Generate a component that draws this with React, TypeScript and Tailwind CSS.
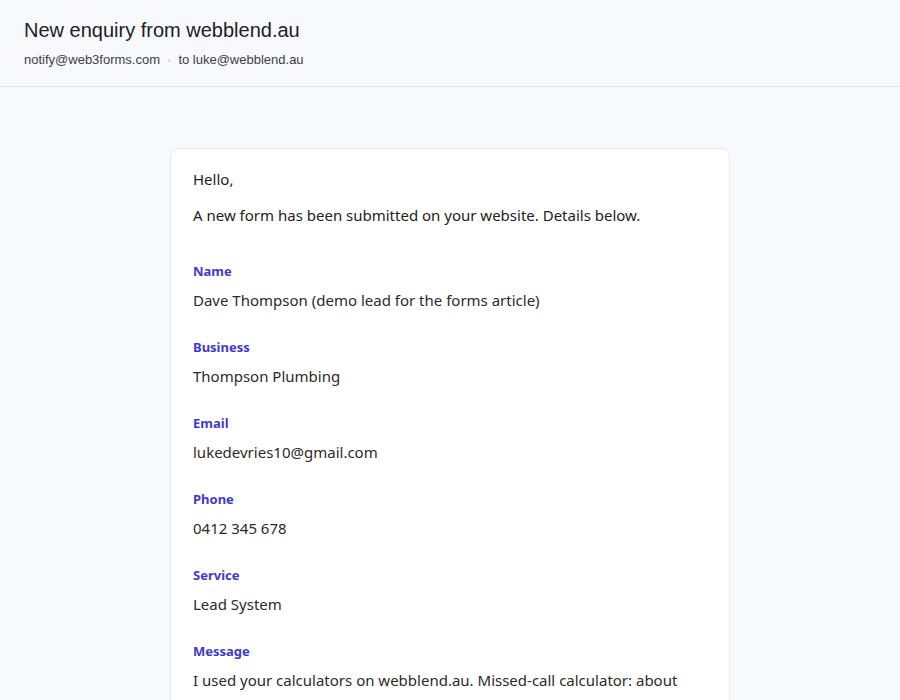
import React from 'react';

type Field = {
  label: string;
  value: string;
};

const fields: Field[] = [
  { label: 'Name', value: 'Dave Thompson (demo lead for the forms article)' },
  { label: 'Business', value: 'Thompson Plumbing' },
  { label: 'Email', value: 'lukedevries10@gmail.com' },
  { label: 'Phone', value: '0412 345 678' },
  { label: 'Service', value: 'Lead System' },
  {
    label: 'Message',
    value:
      'I used your calculators on webblend.au. Missed-call calculator: about $4,200 a month we could be losing. I would like to chat about the lead system and what it would cost to set up for us.',
  },
];

export default function App() {
  return (
    <div className="min-h-screen bg-[#f8f9fc]">
      <div className="border-b border-[#e1e3e8] px-6 pt-[17px] pb-[17px] font-['Liberation_Sans',Arial,sans-serif]">
        <h1 className="text-[20px] leading-[26px] text-[#202124]">New enquiry from webblend.au</h1>
        <div className="mt-[8px] flex items-center gap-[7px] text-[13px] leading-[18px] text-[#3c4043]">
          <span>notify@web3forms.com</span>
          <span className="text-[#9aa0a6]">·</span>
          <span>to luke@webblend.au</span>
        </div>
      </div>

      <div className="flex justify-center pt-[61px] pb-10">
        <div className="w-[560px] rounded-lg border border-[#e6e8ee] bg-white px-[22px] pt-[18px] pb-6 font-['Noto_Sans','Open_Sans',sans-serif] text-[#222]">
          <p className="text-[15px] leading-[24px]">Hello,</p>
          <p className="mt-[12px] text-[15px] leading-[24px]">
            A new form has been submitted on your website. Details below.
          </p>

          <div className="mt-[34px] flex flex-col gap-[24px]">
            {fields.map((f) => (
              <div key={f.label}>
                <div className="text-[13px] font-bold leading-[20px] text-[#4139cc]">{f.label}</div>
                <div className="mt-[6px] text-[15px] leading-[26px] text-[#2b2b2b]">{f.value}</div>
              </div>
            ))}
          </div>
        </div>
      </div>
    </div>
  );
}
